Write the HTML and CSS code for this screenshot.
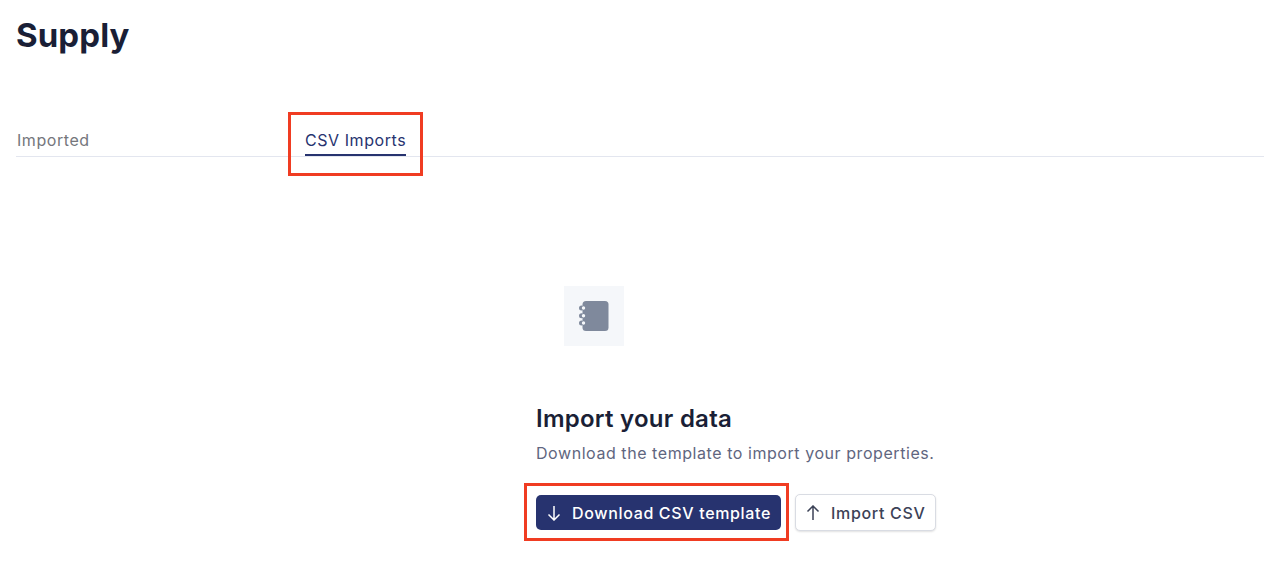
FILE: index.html

```html
<!DOCTYPE html>
<html lang="en">
<head>
    <meta charset="UTF-8">
    <meta name="viewport" content="width=device-width, initial-scale=1.0">
    <title>Supply</title>
    <link rel="stylesheet" href="styles.css">
</head>
<body>

    <h1 class="page-title">Supply</h1>

    <div class="tabs">
        <a class="tab">Imported</a>
        <a class="tab tab-active">CSV Imports
            <span class="callout callout-tab"></span>
        </a>
    </div>

    <div class="empty">
        <div class="empty-icon">
            <svg width="32" height="32" viewBox="0 0 32 32">
                <rect x="4.5" y="1" width="26" height="30" rx="3.5" fill="#7f899c"/>
                <circle cx="3.5" cy="8" r="2.5" fill="#7f899c"/>
                <circle cx="3.5" cy="15.7" r="2.5" fill="#7f899c"/>
                <circle cx="3.5" cy="23" r="2.5" fill="#7f899c"/>
                <circle cx="5.5" cy="8" r="1.7" fill="#f5f7fa"/>
                <circle cx="5.5" cy="15.7" r="1.7" fill="#f5f7fa"/>
                <circle cx="5.5" cy="23" r="1.7" fill="#f5f7fa"/>
            </svg>
        </div>
        <div class="empty-body">
            <h2 class="empty-title">Import your data</h2>
            <p class="empty-text">Download the template to import your properties.</p>
            <div class="actions">
                <div class="btn-wrap">
                    <button class="btn btn-primary">
                        <svg class="btn-icon" viewBox="0 0 16 16"><path d="M8 1v14M2.5 9.5L8 15l5.500-5.500"/></svg>
                        Download CSV template
                    </button>
                    <span class="callout callout-btn"></span>
                </div>
                <button class="btn btn-secondary">
                    <svg class="btn-icon" viewBox="0 0 16 16"><path d="M8 15V1M2.500 6.500L8 1l5.500 5.500"/></svg>
                    Import CSV
                </button>
            </div>
        </div>
    </div>

</body>
</html>
```

FILE: styles.css

```css
body {
    font-family: Inter, "Liberation Sans", sans-serif;
    margin: 0;
    padding: 0 0 0 16px;
    min-height: 585px;
    box-sizing: border-box;
    background-color: #fff;
    color: #1a1f36;
}
.page-title {
    font-size: 33px;
    line-height: 40px;
    font-weight: 700;
    letter-spacing: 0.1px;
    margin: 15px 0 0;
}
.tabs {
    display: flex;
    margin-top: 70px;
    height: 31px;
    border-bottom: 1px solid #e3e6ef;
}
.tab {
    position: relative;
    height: 29px;
    line-height: 31px;
    font-size: 16px;
    letter-spacing: 0.56px;
    color: #75777c;
}
.tab:first-child {
    width: 289px;
    padding-left: 1px;
    box-sizing: border-box;
}
.tab-active {
    color: #27336f;
    border-bottom: 2px solid #27336f;
}
.callout {
    position: absolute;
    border: 3px solid #f03c22;
    pointer-events: none;
}
.callout-tab {
    left: -17px;
    right: -17px;
    top: -13px;
    height: 58px;
}
.callout-btn {
    left: -12px;
    right: -8px;
    top: -12px;
    height: 52px;
}
.empty {
    margin: 129px 0 0 520px;
}
.empty-icon {
    width: 60px;
    height: 60px;
    margin-left: 28px;
    background: #f5f7fa;
    display: flex;
    align-items: center;
    justify-content: center;
}
.empty-body {
    margin-top: 58px;
}
.empty-title {
    font-size: 24px;
    line-height: 30px;
    font-weight: 600;
    letter-spacing: 0.25px;
    margin: 0;
}
.empty-text {
    font-size: 16px;
    line-height: 24px;
    letter-spacing: 0.56px;
    color: #5f6680;
    margin: 7px 0 0;
}
.actions {
    display: flex;
    align-items: center;
    gap: 14px;
    margin-top: 29px;
}
.btn-wrap {
    position: relative;
    display: flex;
}
.btn {
    display: flex;
    align-items: center;
    gap: 10px;
    font-family: inherit;
    font-size: 16px;
    font-weight: 500;
    letter-spacing: 0.66px;
    border-radius: 5px;
    cursor: pointer;
}
.btn-icon {
    width: 16px;
    height: 16px;
    fill: none;
    stroke: currentColor;
    stroke-width: 1.5;
}
.btn-primary {
    height: 35px;
    padding: 0 10px;
    border: none;
    background: #27336f;
    color: #fff;
}
.btn-secondary {
    height: 37px;
    padding: 0 10px 0 9px;
    border: 1px solid #d9dce3;
    background: #fff;
    color: #3c4257;
    box-shadow: 0 1px 2px rgba(0, 0, 0, 0.12);
}
```
